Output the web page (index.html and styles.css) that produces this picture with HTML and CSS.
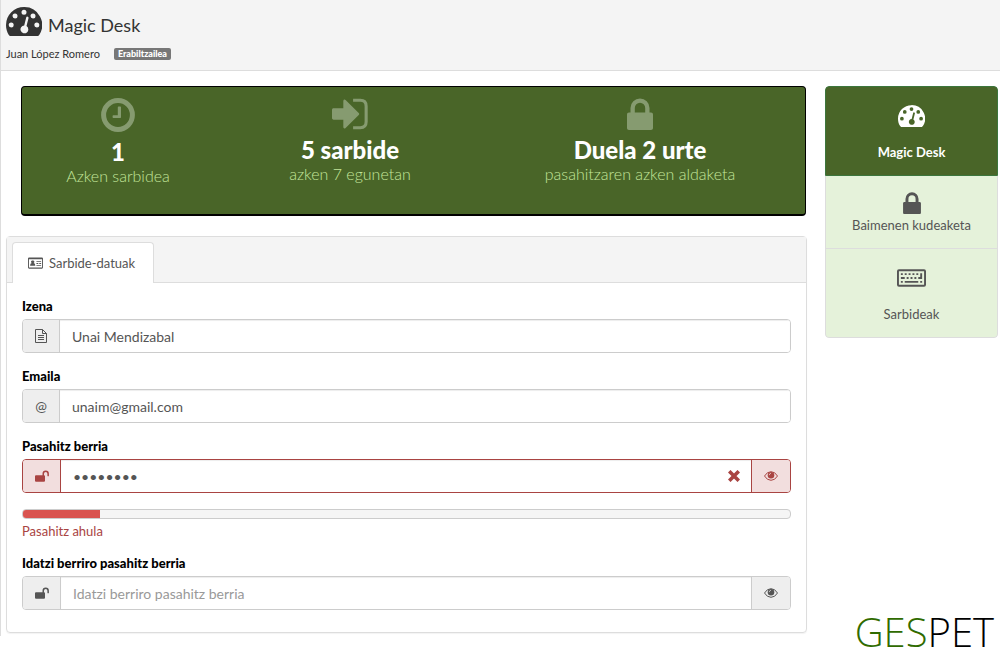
FILE: index.html
```html
<!DOCTYPE html>
<html lang="eu">
<head>
    <meta charset="UTF-8">
    <meta name="viewport" content="width=device-width, initial-scale=1.0">
    <title>Magic Desk</title>
    <link rel="stylesheet" href="styles.css">
</head>
<body>
    <!-- Shared icons -->
    <svg class="sprite" aria-hidden="true">
        <symbol id="gauge" viewBox="0 0 36 29">
            <path fill-rule="evenodd" d="M18 0A18 18 0 0 0 0 18c0 3.600 1 7 2.800 9.900.4.700.9 1.100 1.600 1.100h27.200c.7 0 1.200-.4 1.600-1.100A18 18 0 0 0 18 0zM18 2.700a2.500 2.500 0 1 1 0 5 2.500 2.500 0 0 1 0-5zM9 6.500a2.500 2.500 0 1 1 0 5 2.500 2.500 0 0 1 0-5zM27 6.500a2.500 2.500 0 1 1 0 5 2.500 2.500 0 0 1 0-5zM5.200 15.500a2.500 2.500 0 1 1 0 5 2.500 2.500 0 0 1 0-5zM30.800 15.500a2.500 2.500 0 1 1 0 5 2.500 2.500 0 0 1 0-5zM20.200 10.500a1.200 1.200 0 0 1 2.300.7l-2 7.900a3.900 3.900 0 1 1-2.300-.6z"/>
        </symbol>
        <symbol id="clock" viewBox="0 0 34 34">
            <circle cx="17" cy="17" r="14.400" fill="none" stroke="currentColor" stroke-width="5"/>
            <path d="M17.500 8.500h1.800q.7 0 .7.700v10q0 .7-.7.700h-7q-.7 0-.7-.7v-1.200q0-.7.700-.7h4.500V9.200q0-.7.700-.7z"/>
        </symbol>
        <symbol id="sign-in" viewBox="0 0 35 30">
            <path d="M1.500 9.500H11V2.500c0-1.500 1.200-2 2.200-1L26 14c.6.600.6 1.400 0 2L13.200 28.500c-1 1-2.200.5-2.200-1V20.500H1.500C.6 20.500 0 19.900 0 19v-8c0-.9.6-1.500 1.500-1.500z"/>
            <path d="M20.500 1.700h7q5.700 0 5.700 5.700v15.200q0 5.700-5.700 5.700h-7" fill="none" stroke="currentColor" stroke-width="3"/>
        </symbol>
        <symbol id="lock" viewBox="0 0 26 32">
            <path fill-rule="evenodd" d="M3.500 14.500V10a9.500 9.500 0 0 1 19 0v4.500H24c1.200 0 2 .8 2 2V30c0 1.200-.8 2-2 2H2c-1.200 0-2-.8-2-2V16.500c0-1.200.8-2 2-2zM7.800 14.500h10.400V10a5.200 5.200 0 0 0-10.400 0z"/>
        </symbol>
        <symbol id="unlock" viewBox="0 0 14 12">
            <path d="M1 5.200h6.500V3.700a3.200 3.200 0 0 1 6.400 0v2q0 .6-.7.600t-.8-.6v-2a1.700 1.700 0 0 0-3.400 0v1.500q1 0 1 1V10.700q0 1-1 1H1q-1 0-1-1V6.200q0-1 1-1z"/>
        </symbol>
        <symbol id="keyboard" viewBox="0 0 30 18">
            <path fill-rule="evenodd" d="M2 0h26q2 0 2 2v14q0 2-2 2H2q-2 0-2-2V2Q0 0 2 0zM2 2v14h26V2z"/>
            <path d="M4 4h2v2H4zM8 4h2v2H8zM12 4h2v2h-2zM16 4h2v2h-2zM20 4h2v2h-2zM24 4h2v6h-4V8h2zM4 8h4v2H4zM10 8h2v2h-2zM14 8h2v2h-2zM18 8h2v2h-2zM4 12h2v2H4zM8 12h14v2H8zM24 12h2v2h-2z"/>
        </symbol>
        <symbol id="card" viewBox="0 0 16 12">
            <path fill-rule="evenodd" d="M1.200 0h13.600Q16 0 16 1.200v9.600q0 1.200-1.200 1.200H1.200Q0 12 0 10.800V1.200Q0 0 1.200 0zM1 2v8.800h14V2z"/>
            <path d="M5 3.300a1.500 1.500 0 0 1 1 2.800Q7.800 6.400 7.800 9H2.200Q2.200 6.400 4 6.100a1.500 1.500 0 0 1 1-2.800zM9 4h5v1H9zM9 6h2v1H9zM12 6h2v1h-2zM9 8h5v1H9z"/>
        </symbol>
        <symbol id="file" viewBox="0 0 12 14">
            <path d="M.5.5h7l4 4v9H.5zM7.500.5v4h4M3 6.500h6M3 8.500h6M3 10.500h6" fill="none" stroke="currentColor"/>
        </symbol>
        <symbol id="eye" viewBox="0 0 14 10">
            <path d="M.5 5Q3 .7 7 .7T13.500 5Q11 9.300 7 9.300T.5 5z" fill="none" stroke="currentColor"/>
            <circle cx="7" cy="4.200" r="3.300"/>
            <path d="M5.200 4.200Q5.300 2.500 7 2.300" fill="none" stroke="#fff" stroke-width=".6"/>
        </symbol>
        <symbol id="cross" viewBox="0 0 12 12">
            <path d="M2.500 2.500l7 7M9.500 2.500l-7 7" stroke="currentColor" stroke-width="3.600" stroke-linecap="square"/>
        </symbol>
    </svg>

    <header class="top">
        <h1><svg class="top-icon"><use href="#gauge"/></svg> Magic Desk</h1>
        <div class="user">
            <span>Juan López Romero</span>
            <span class="badge">Erabiltzailea</span>
        </div>
    </header>

    <div class="layout">
        <main class="content">
            <section class="stats">
                <div class="stat">
                    <svg class="stat-icon stat-clock"><use href="#clock"/></svg>
                    <strong>1</strong>
                    <span>Azken sarbidea</span>
                </div>
                <div class="stat">
                    <svg class="stat-icon"><use href="#sign-in"/></svg>
                    <strong>5 sarbide</strong>
                    <span>azken 7 egunetan</span>
                </div>
                <div class="stat">
                    <svg class="stat-icon"><use href="#lock"/></svg>
                    <strong>Duela 2 urte</strong>
                    <span>pasahitzaren azken aldaketa</span>
                </div>
            </section>

            <section class="panel">
                <nav class="tabs">
                    <a class="tab" href="#datuak"><svg class="tab-icon"><use href="#card"/></svg>Sarbide-datuak</a>
                </nav>
                <form class="form" id="datuak">
                    <div class="group">
                        <label for="izena">Izena</label>
                        <div class="field">
                            <span class="addon"><svg class="file-icon"><use href="#file"/></svg></span>
                            <input type="text" id="izena" value="Unai Mendizabal">
                        </div>
                    </div>
                    <div class="group">
                        <label for="emaila">Emaila</label>
                        <div class="field">
                            <span class="addon">@</span>
                            <input type="email" id="emaila" value="unaim@gmail.com">
                        </div>
                    </div>
                    <div class="group">
                        <label for="pasahitza">Pasahitz berria</label>
                        <div class="field password error">
                            <span class="addon"><svg class="unlock-icon"><use href="#unlock"/></svg></span>
                            <input type="password" id="pasahitza" value="pasahitz">
                            <svg class="cross-icon"><use href="#cross"/></svg>
                            <button type="button" class="addon" aria-label="Erakutsi pasahitza"><svg class="eye-icon"><use href="#eye"/></svg></button>
                        </div>
                        <div class="strength"><div class="strength-bar"></div></div>
                        <p class="help">Pasahitz ahula</p>
                    </div>
                    <div class="group">
                        <label for="berriro">Idatzi berriro pasahitz berria</label>
                        <div class="field password">
                            <span class="addon"><svg class="unlock-icon"><use href="#unlock"/></svg></span>
                            <input type="password" id="berriro" placeholder="Idatzi berriro pasahitz berria">
                            <button type="button" class="addon" aria-label="Erakutsi pasahitza"><svg class="eye-icon"><use href="#eye"/></svg></button>
                        </div>
                    </div>
                </form>
            </section>
        </main>

        <aside class="side">
            <nav class="menu">
                <a href="#desk" class="menu-item tall active"><svg class="menu-gauge"><use href="#gauge"/></svg>Magic Desk</a>
                <a href="#baimenak" class="menu-item"><svg class="menu-lock"><use href="#lock"/></svg>Baimenen kudeaketa</a>
                <a href="#sarbideak" class="menu-item tall"><svg class="menu-keyboard"><use href="#keyboard"/></svg>Sarbideak</a>
            </nav>
            <div class="logo"><span>GES</span>PET</div>
        </aside>
    </div>
</body>
</html>
```

FILE: styles.css
```css
* {
    box-sizing: border-box;
}

body {
    margin: 0 4px 0 0;
    font-family: Lato, sans-serif;
    font-size: 14px;
    line-height: 18px;
    color: #555;
    background: #fff;
}

svg {
    display: block;
    flex: none;
    fill: currentColor;
}

.sprite {
    display: none;
}

a {
    color: inherit;
    text-decoration: none;
}

/* Header */
.top {
    padding: 6px 5px;
    background: #f4f4f4;
    border-left: 1px solid #ddd;
    border-bottom: 1px solid #ddd;
    color: #333;
}

h1 {
    display: flex;
    align-items: center;
    gap: 6px;
    margin: 0;
    font-size: 18px;
    font-weight: 400;
    line-height: 38px;
}

.top-icon {
    width: 36px;
    height: 29px;
    margin-bottom: 8px;
}

.user {
    display: flex;
    align-items: center;
    gap: 14px;
    height: 20px;
    font-size: 11px;
}

.badge {
    padding: 0 4px;
    border-radius: 2px;
    background: #777;
    color: #fff;
    font-size: 9px;
    font-weight: 900;
    line-height: 12px;
}

/* Page columns */
.layout {
    display: flex;
    align-items: flex-start;
}

.content {
    flex: 1;
    padding: 15px 0 3px 5px;
    border-left: 1px solid #ddd;
}

.side {
    width: 193px;
    padding: 15px 2px 0 18px;
}

/* Summary */
.stats {
    display: grid;
    grid-template-columns: 192fr 272fr 308fr;
    height: 130px;
    margin: 0 1px 20px 15px;
    padding: 11px 11px 0 0;
    border: 1px solid #000;
    border-bottom-width: 2px;
    border-radius: 4px;
    background: #496528;
}

.stat {
    display: flex;
    flex-direction: column;
    align-items: center;
    color: #c3e59b;
    font-size: 16px;
    font-weight: 300;
    line-height: 20px;
}

.stat-icon {
    width: 36px;
    height: 32px;
    margin-bottom: 6px;
    color: #869b70;
}

.stat-clock {
    height: 34px;
}

.stat strong {
    color: #fff;
    font-size: 24px;
    font-weight: 900;
    line-height: 28px;
}

/* Form panel */
.panel {
    border: 1px solid #ddd;
    border-radius: 4px;
    box-shadow: 0 1px 1px rgba(0, 0, 0, .05);
}

.tabs {
    display: flex;
    padding: 5px 5px 0;
    background: #f4f4f4;
    border-bottom: 1px solid #ddd;
}

.tab {
    display: flex;
    align-items: center;
    gap: 6px;
    height: 41px;
    margin-bottom: -1px;
    padding: 0 18px 0 15px;
    border: 1px solid #ddd;
    border-bottom: 0;
    border-radius: 4px 4px 0 0;
    background: #fff;
    font-size: 13px;
}

.tab-icon {
    width: 15px;
    height: 12px;
}

.form {
    padding: 14px 15px 22px;
}

.group + .group {
    margin-top: 14px;
}

label {
    display: block;
    margin-bottom: 4px;
    color: #000;
    font-size: 13px;
    font-weight: 900;
}

.field {
    display: flex;
    align-items: center;
    position: relative;
    height: 34px;
    border: 1px solid #ccc;
    border-radius: 4px;
    overflow: hidden;
}

.field input {
    flex: 1;
    min-width: 0;
    height: 100%;
    padding: 0 12px;
    border: 0;
    outline: 0;
    background: #fff;
    box-shadow: inset 0 1px 1px rgba(0, 0, 0, .075);
    color: #555;
    font: inherit;
}

.field input::placeholder {
    color: #999;
}

.addon {
    display: flex;
    flex: none;
    align-items: center;
    justify-content: center;
    width: 37px;
    height: 100%;
    padding: 0;
    border: 0;
    border-right: 1px solid #ccc;
    background: #eee;
    color: #555;
}

.password .addon {
    width: 38px;
}

.password button.addon {
    width: 39px;
    border-right: 0;
    border-left: 1px solid #ccc;
}

.error,
.error .addon,
.error button.addon {
    border-color: #a94442;
}

.error .addon {
    background: #f2dede;
    color: #a94442;
}

.file-icon {
    width: 12px;
    height: 14px;
}

.unlock-icon {
    width: 14px;
    height: 12px;
}

.eye-icon {
    width: 14px;
    height: 10px;
}

.cross-icon {
    position: absolute;
    right: 50px;
    width: 12px;
    height: 12px;
    color: #a94442;
}

.strength {
    height: 10px;
    margin-top: 16px;
    border: 1px solid #ccc;
    border-radius: 4px;
    background: #f5f5f5;
    overflow: hidden;
}

.strength-bar {
    width: 10%;
    height: 100%;
    background: #d9534f;
}

.help {
    margin: 3px 0 0;
    color: #a94442;
    font-size: 13px;
}

/* Side menu */
.menu {
    border-radius: 4px;
    overflow: hidden;
}

.menu-item {
    display: flex;
    flex-direction: column;
    align-items: center;
    height: 73px;
    padding-top: 16px;
    border: 1px solid #ddd;
    border-top: 0;
    background: #e5f2da;
    font-size: 13px;
}

.menu-item:last-child {
    border-radius: 0 0 4px 4px;
}

.tall {
    height: 89px;
    padding-top: 20px;
}

.active {
    height: 90px;
    padding-top: 18px;
    border: 1px solid #3c763d;
    border-radius: 4px 4px 0 0;
    background: #496528;
    color: #fff;
    font-weight: 700;
}

.menu-gauge {
    width: 27px;
    height: 22px;
    margin-bottom: 16px;
}

.menu-lock {
    width: 18px;
    height: 22px;
    margin-bottom: 2px;
}

.menu-keyboard {
    width: 29px;
    height: 18px;
    margin-bottom: 18px;
}

.logo {
    margin-top: 268px;
    padding-right: 4px;
    color: #000;
    font-family: "Open Sans", sans-serif;
    font-size: 40px;
    font-weight: 300;
    line-height: 52px;
    text-align: right;
}

.logo span {
    color: #306b00;
}
```
